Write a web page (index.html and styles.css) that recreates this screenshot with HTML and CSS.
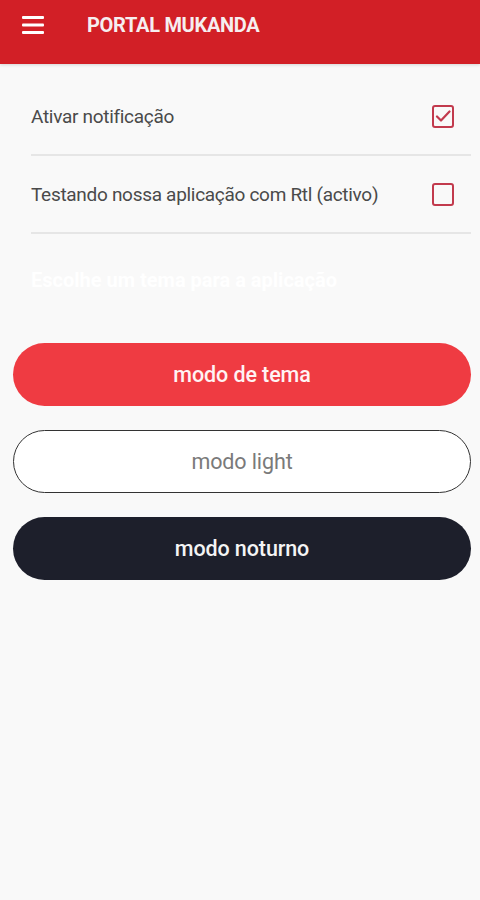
FILE: index.html
```html
<!DOCTYPE html>
<html lang="pt">
<head>
<meta charset="utf-8">
<title>Portal Mukanda</title>
<link rel="stylesheet" href="styles.css">
</head>
<body>
<header class="appbar">
  <svg class="menu" width="22" height="20" viewBox="0 0 22 20" aria-hidden="true">
    <rect x="0" y="1" width="22" height="3" rx="1" fill="#fff"/>
    <rect x="0" y="8.5" width="22" height="3" rx="1" fill="#fff"/>
    <rect x="0" y="16" width="22" height="3" rx="1" fill="#fff"/>
  </svg>
  <h1 class="title">PORTAL MUKANDA</h1>
</header>
<main class="content">
  <ul class="settings">
    <li class="setting">
      <span class="label">Ativar notificação</span>
      <span class="check checked">
        <svg width="16" height="14" viewBox="0 0 16 14" aria-hidden="true"><path d="M2 7.5 L6 11.5 L14.5 2.5" fill="none" stroke="#c23a4d" stroke-width="2.2" stroke-linecap="round" stroke-linejoin="round"/></svg>
      </span>
    </li>
    <li class="setting">
      <span class="label">Testando nossa aplicação com Rtl (activo)</span>
      <span class="check"></span>
    </li>
  </ul>
  <p class="hint">Escolhe um tema para a aplicação</p>
  <div class="buttons">
    <button class="btn btn-theme">modo de tema</button>
    <button class="btn btn-light">modo light</button>
    <button class="btn btn-dark">modo noturno</button>
  </div>
</main>
</body>
</html>
```
FILE: styles.css
```css
* { box-sizing: border-box; }
html, body { margin: 0; padding: 0; }
body {
  width: 480px;
  height: 900px;
  background: #f9f9f9;
  font-family: Roboto, "Liberation Sans", sans-serif;
}
.appbar {
  height: 64px;
  background: #d21f26;
  display: flex;
  align-items: center;
  padding-left: 22px;
  box-shadow: 0 1px 3px rgba(0,0,0,0.15);
}
.menu { display: block; margin-top: -14px; }
.title {
  margin: -14px 0 0 43px;
  color: #f6eef0;
  font-size: 20px;
  font-weight: 700;
  letter-spacing: -0.3px;
}
.content { padding: 0 9px 0 13px; }
.settings {
  list-style: none;
  margin: 0;
  padding: 0 0 0 18px;
}
.setting {
  height: 78px;
  display: flex;
  align-items: center;
  justify-content: space-between;
  border-bottom: 2px solid #e6e6e6;
  padding-right: 17px;
}
.setting:first-child { height: 92px; padding-top: 14px; }
.label {
  color: #4a4a4a;
  font-size: 19px;
  letter-spacing: -0.3px;
}
.check {
  width: 22px;
  height: 23px;
  border: 2.2px solid #c23a4d;
  border-radius: 3px;
  display: flex;
  align-items: center;
  justify-content: center;
}
.hint {
  margin: 34px 0 0 18px;
  height: 30px;
  color: #ffffff;
  font-size: 20px;
  font-weight: 700;
}
.buttons {
  margin-top: 45px;
  display: flex;
  flex-direction: column;
  gap: 24px;
}
.btn {
  height: 63px;
  width: 458px;
  border-radius: 32px;
  border: none;
  font-family: Roboto, "Liberation Sans", sans-serif;
  font-size: 21.5px;
  font-weight: 500;
  letter-spacing: -0.1px;
  padding: 0;
}
.btn-theme { background: #ef3b42; color: #fff3f3; }
.btn-light {
  background: #ffffff;
  color: #7a7a7a;
  font-weight: 400;
  border: 1.8px solid #333;
}
.btn-dark { background: #1d1f2b; color: #f4f4f4; }
```
